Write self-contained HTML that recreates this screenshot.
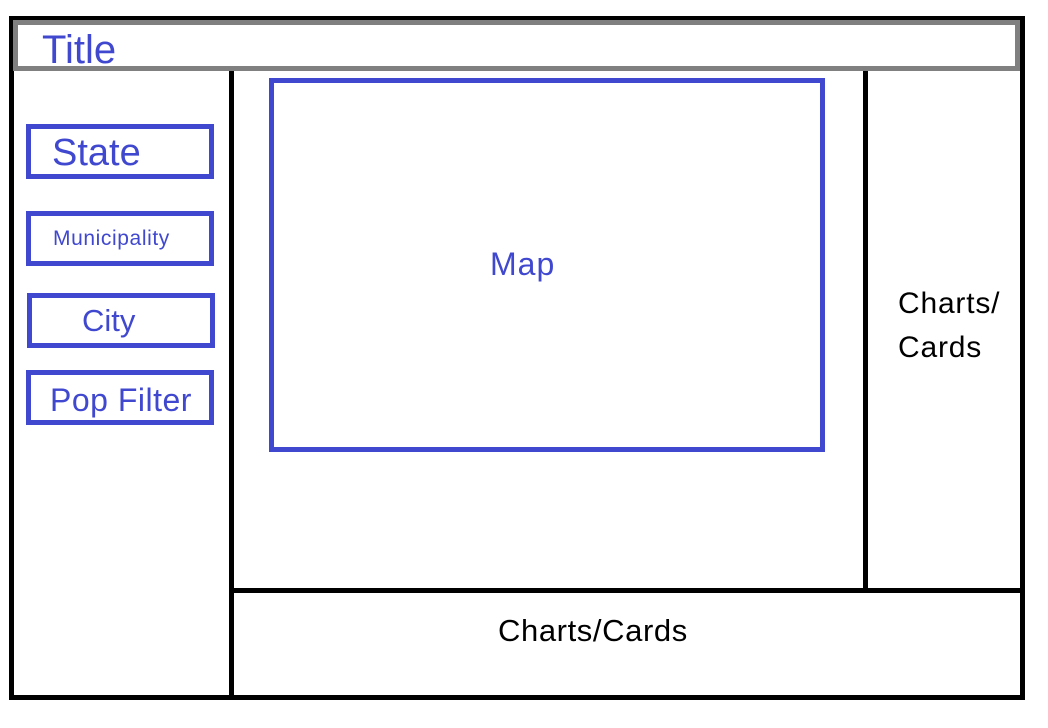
<!DOCTYPE html>
<html><head><meta charset="utf-8"><style>
html,body{margin:0;padding:0;background:#fff;width:1048px;height:728px;overflow:hidden;position:relative}
div{position:absolute;box-sizing:border-box}
.b{border:5px solid #4048cf}
.t{font-family:"Liberation Sans",sans-serif;white-space:nowrap;line-height:1}
.blue{color:#4048cf}
.k{background:#000}
</style></head><body>
<div style="left:9px;top:16px;width:1016px;height:684px;border:5px solid #000"></div>
<div style="left:13px;top:20px;width:1007px;height:51px;border:5px solid #808080;background:#fff"></div>
<div class="t blue" style="left:42px;top:30px;font-size:40px">Title</div>
<div class="k" style="left:229px;top:71px;width:5px;height:626px"></div>
<div class="k" style="left:863px;top:71px;width:5px;height:520px"></div>
<div class="k" style="left:231px;top:588px;width:794px;height:5px"></div>
<div class="b" style="left:26px;top:124px;width:188px;height:55px"></div>
<div class="t blue" style="left:52px;top:134px;font-size:38px">State</div>
<div class="b" style="left:26px;top:211px;width:188px;height:55px"></div>
<div class="t blue" style="left:53px;top:228px;font-size:21px;letter-spacing:0.6px">Municipality</div>
<div class="b" style="left:27px;top:293px;width:188px;height:55px"></div>
<div class="t blue" style="left:82px;top:305px;font-size:31px">City</div>
<div class="b" style="left:26px;top:370px;width:188px;height:55px"></div>
<div class="t blue" style="left:50px;top:384px;font-size:32px;letter-spacing:0.5px">Pop Filter</div>
<div class="b" style="left:269px;top:78px;width:556px;height:374px"></div>
<div class="t blue" style="left:490px;top:248px;font-size:32px;letter-spacing:1px">Map</div>
<div class="t" style="left:898px;top:282px;font-size:30px;line-height:44px;letter-spacing:0.8px">Charts/<br>Cards</div>
<div class="t" style="left:498px;top:615px;font-size:31px;letter-spacing:0.6px">Charts/Cards</div>
</body></html>
